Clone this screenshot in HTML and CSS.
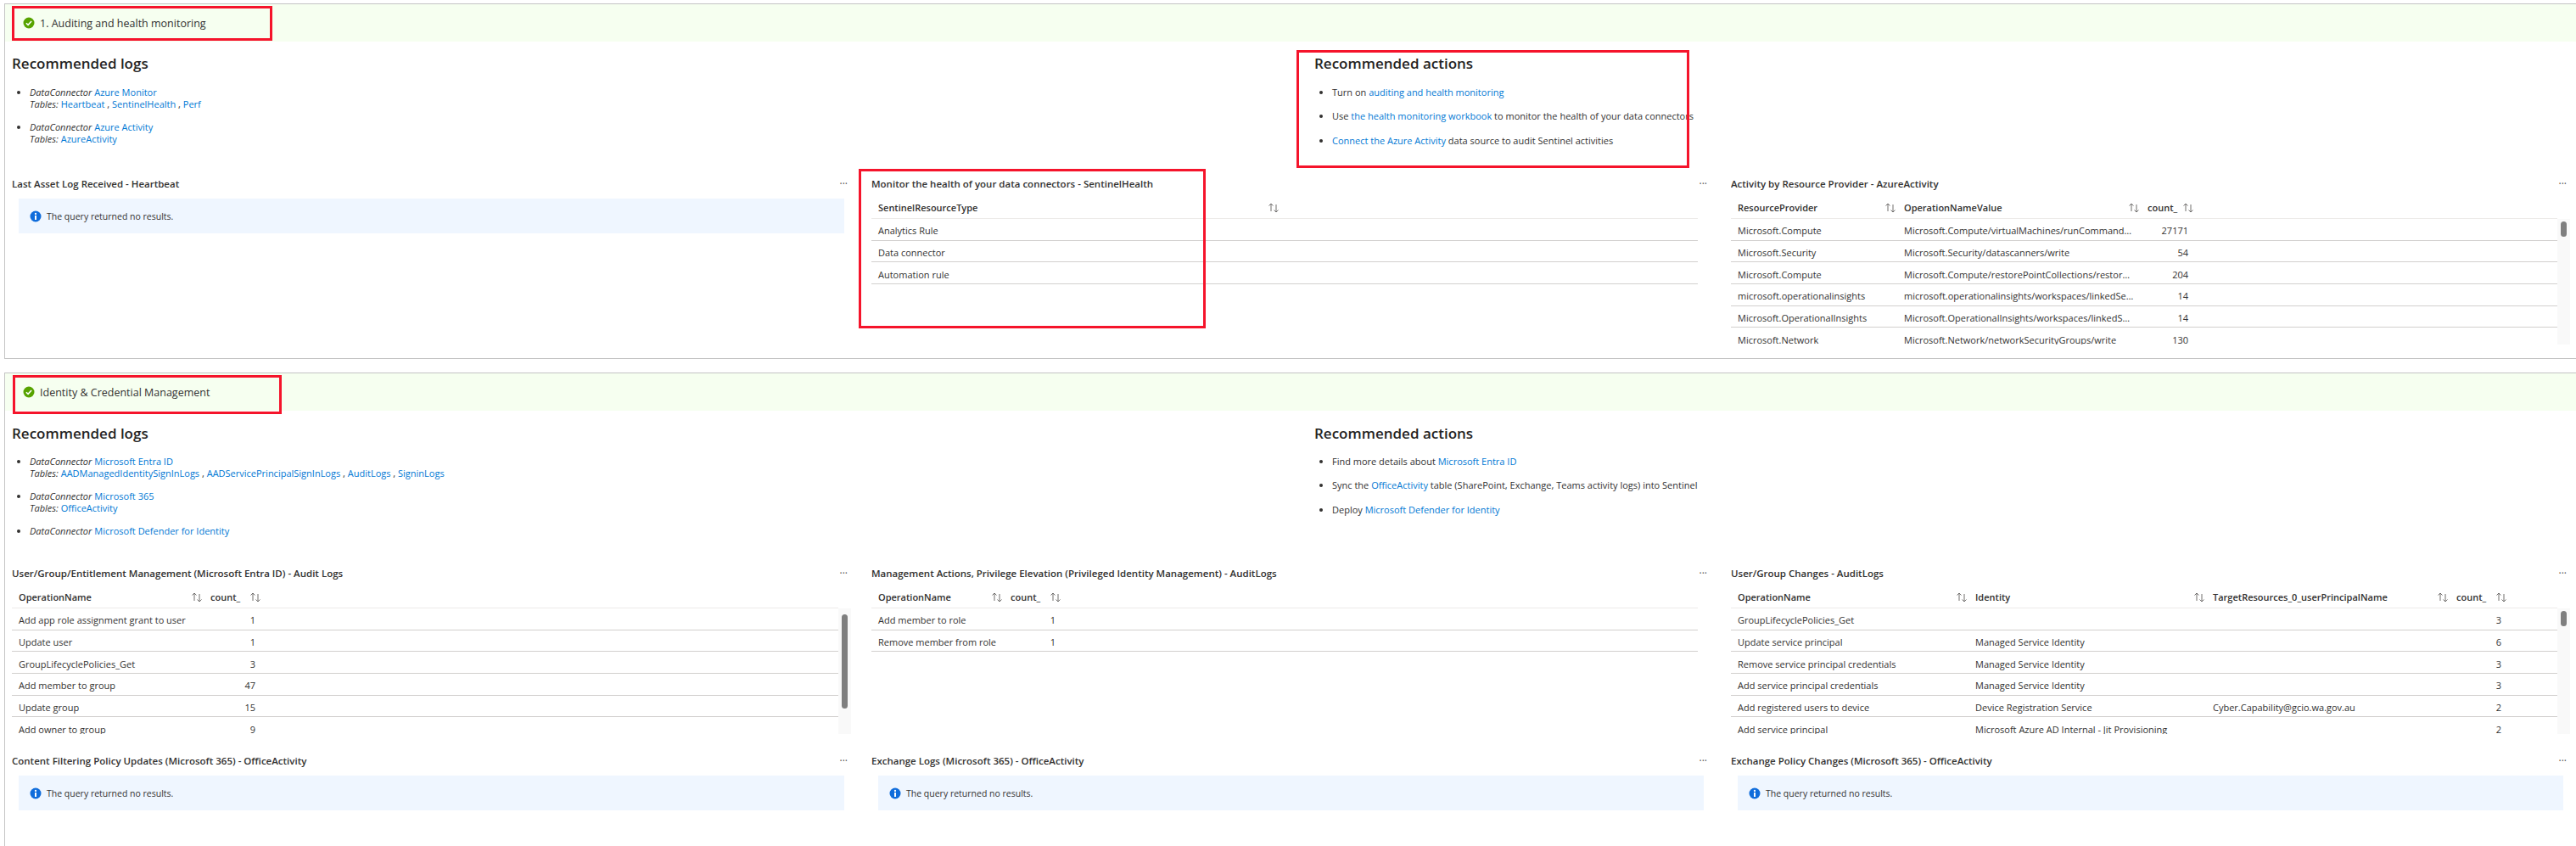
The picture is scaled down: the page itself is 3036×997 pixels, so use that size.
FILE: index.html
```html
<!DOCTYPE html>
<html lang="en">
<head>
<meta charset="utf-8">
<title>Workbook</title>
<link rel="stylesheet" href="styles.css">
</head>
<body>
<svg class="sprites" width="0" height="0" aria-hidden="true">
  <symbol id="check" viewBox="0 0 14 14"><circle cx="7" cy="7" r="6.5" fill="#57a300"/><path d="M3.9 7.2l2.2 2.2 4-4.4" fill="none" stroke="#fff" stroke-width="1.6"/></symbol>
  <symbol id="info" viewBox="0 0 14 14"><circle cx="7" cy="7" r="6.5" fill="#0f6cdb"/><rect x="6" y="6" width="2" height="5" fill="#fff"/><circle cx="7" cy="4" r="1.15" fill="#fff"/></symbol>
  <symbol id="sort" viewBox="0 0 14 14"><path d="M4 11V2M1.5 4.5L4 2l2.5 2.5M10 3v9M7.5 9.5L10 12l2.5-2.5" fill="none" stroke="#605e5c" stroke-width="0.9"/></symbol>
</svg>

<section class="group first">
  <header class="banner"><svg class="ico"><use href="#check"/></svg><span>1. Auditing and health monitoring</span></header>
  <div class="recs">
    <div class="rec">
      <h2>Recommended logs</h2>
      <ul class="logs">
        <li><em>DataConnector</em> <a>Azure Monitor</a><br><em>Tables:</em> <a>Heartbeat</a> , <a>SentinelHealth</a> , <a>Perf</a></li>
        <li><em>DataConnector</em> <a>Azure Activity</a><br><em>Tables:</em> <a>AzureActivity</a></li>
      </ul>
    </div>
    <div class="rec actions">
      <h2>Recommended actions</h2>
      <ul class="acts">
        <li>Turn on <a>auditing and health monitoring</a></li>
        <li>Use <a>the health monitoring workbook</a> to monitor the health of your data connectors</li>
        <li><a>Connect the Azure Activity</a> data source to audit Sentinel activities</li>
      </ul>
    </div>
  </div>
  <div class="panels">
    <article class="panel">
      <div class="ptitle"><h3>Last Asset Log Received - Heartbeat</h3><span class="more">···</span></div>
      <div class="notice"><svg class="ico"><use href="#info"/></svg><span>The query returned no results.</span></div>
    </article>
    <article class="panel">
      <div class="ptitle"><h3>Monitor the health of your data connectors - SentinelHealth</h3><span class="more">···</span></div>
      <div class="grid t-sentinel">
        <div class="row head"><div class="c">SentinelResourceType<svg class="sort"><use href="#sort"/></svg></div></div>
        <div class="body">
          <div class="row"><div class="c">Analytics Rule</div></div>
          <div class="row"><div class="c">Data connector</div></div>
          <div class="row"><div class="c">Automation rule</div></div>
        </div>
      </div>
    </article>
    <article class="panel">
      <div class="ptitle"><h3>Activity by Resource Provider - AzureActivity</h3><span class="more">···</span></div>
      <div class="grid t-activity scrolls thumb-short">
        <div class="row head"><div class="c">ResourceProvider<svg class="sort"><use href="#sort"/></svg></div><div class="c">OperationNameValue<svg class="sort"><use href="#sort"/></svg></div><div class="c">count_<svg class="sort"><use href="#sort"/></svg></div></div>
        <div class="body">
          <div class="row"><div class="c">Microsoft.Compute</div><div class="c">Microsoft.Compute/virtualMachines/runCommand/action</div><div class="c n">27171</div></div>
          <div class="row"><div class="c">Microsoft.Security</div><div class="c">Microsoft.Security/datascanners/write</div><div class="c n">54</div></div>
          <div class="row"><div class="c">Microsoft.Compute</div><div class="c">Microsoft.Compute/restorePointCollections/restorePoints/write</div><div class="c n">204</div></div>
          <div class="row"><div class="c">microsoft.operationalinsights</div><div class="c">microsoft.operationalinsights/workspaces/linkedServices/write</div><div class="c n">14</div></div>
          <div class="row"><div class="c">Microsoft.OperationalInsights</div><div class="c">Microsoft.OperationalInsights/workspaces/linkedServices/write</div><div class="c n">14</div></div>
          <div class="row"><div class="c">Microsoft.Network</div><div class="c">Microsoft.Network/networkSecurityGroups/write</div><div class="c n">130</div></div>
        </div>
      </div>
    </article>
  </div>
  <div class="mark m1"></div>
  <div class="mark m2"></div>
  <div class="mark m3"></div>
</section>

<section class="group second">
  <header class="banner"><svg class="ico"><use href="#check"/></svg><span>Identity &amp; Credential Management</span></header>
  <div class="recs">
    <div class="rec">
      <h2>Recommended logs</h2>
      <ul class="logs">
        <li><em>DataConnector</em> <a>Microsoft Entra ID</a><br><em>Tables:</em> <a>AADManagedIdentitySignInLogs</a> , <a>AADServicePrincipalSignInLogs</a> , <a>AuditLogs</a> , <a>SigninLogs</a></li>
        <li><em>DataConnector</em> <a>Microsoft 365</a><br><em>Tables:</em> <a>OfficeActivity</a></li>
        <li><em>DataConnector</em> <a>Microsoft Defender for Identity</a></li>
      </ul>
    </div>
    <div class="rec actions">
      <h2>Recommended actions</h2>
      <ul class="acts">
        <li>Find more details about <a>Microsoft Entra ID</a></li>
        <li>Sync the <a>OfficeActivity</a> table (SharePoint, Exchange, Teams activity logs) into Sentinel</li>
        <li>Deploy <a>Microsoft Defender for Identity</a></li>
      </ul>
    </div>
  </div>
  <div class="panels">
    <article class="panel">
      <div class="ptitle"><h3>User/Group/Entitlement Management (Microsoft Entra ID) - Audit Logs</h3><span class="more">···</span></div>
      <div class="grid t-entitle scrolls thumb-long">
        <div class="row head"><div class="c">OperationName<svg class="sort"><use href="#sort"/></svg></div><div class="c">count_<svg class="sort"><use href="#sort"/></svg></div></div>
        <div class="body">
          <div class="row"><div class="c">Add app role assignment grant to user</div><div class="c n">1</div></div>
          <div class="row"><div class="c">Update user</div><div class="c n">1</div></div>
          <div class="row"><div class="c">GroupLifecyclePolicies_Get</div><div class="c n">3</div></div>
          <div class="row"><div class="c">Add member to group</div><div class="c n">47</div></div>
          <div class="row"><div class="c">Update group</div><div class="c n">15</div></div>
          <div class="row"><div class="c">Add owner to group</div><div class="c n">9</div></div>
        </div>
      </div>
    </article>
    <article class="panel">
      <div class="ptitle"><h3>Management Actions, Privilege Elevation (Privileged Identity Management) - AuditLogs</h3><span class="more">···</span></div>
      <div class="grid t-pim">
        <div class="row head"><div class="c">OperationName<svg class="sort"><use href="#sort"/></svg></div><div class="c">count_<svg class="sort"><use href="#sort"/></svg></div></div>
        <div class="body">
          <div class="row"><div class="c">Add member to role</div><div class="c n">1</div></div>
          <div class="row"><div class="c">Remove member from role</div><div class="c n">1</div></div>
        </div>
      </div>
    </article>
    <article class="panel">
      <div class="ptitle"><h3>User/Group Changes - AuditLogs</h3><span class="more">···</span></div>
      <div class="grid t-changes scrolls thumb-short">
        <div class="row head"><div class="c">OperationName<svg class="sort"><use href="#sort"/></svg></div><div class="c">Identity<svg class="sort"><use href="#sort"/></svg></div><div class="c">TargetResources_0_userPrincipalName<svg class="sort"><use href="#sort"/></svg></div><div class="c">count_<svg class="sort"><use href="#sort"/></svg></div></div>
        <div class="body">
          <div class="row"><div class="c">GroupLifecyclePolicies_Get</div><div class="c"></div><div class="c"></div><div class="c n">3</div></div>
          <div class="row"><div class="c">Update service principal</div><div class="c">Managed Service Identity</div><div class="c"></div><div class="c n">6</div></div>
          <div class="row"><div class="c">Remove service principal credentials</div><div class="c">Managed Service Identity</div><div class="c"></div><div class="c n">3</div></div>
          <div class="row"><div class="c">Add service principal credentials</div><div class="c">Managed Service Identity</div><div class="c"></div><div class="c n">3</div></div>
          <div class="row"><div class="c">Add registered users to device</div><div class="c">Device Registration Service</div><div class="c">Cyber.Capability@gcio.wa.gov.au</div><div class="c n">2</div></div>
          <div class="row"><div class="c">Add service principal</div><div class="c">Microsoft Azure AD Internal - Jit Provisioning</div><div class="c"></div><div class="c n">2</div></div>
        </div>
      </div>
    </article>
    <article class="panel short">
      <div class="ptitle"><h3>Content Filtering Policy Updates (Microsoft 365) - OfficeActivity</h3><span class="more">···</span></div>
      <div class="notice"><svg class="ico"><use href="#info"/></svg><span>The query returned no results.</span></div>
    </article>
    <article class="panel short">
      <div class="ptitle"><h3>Exchange Logs (Microsoft 365) - OfficeActivity</h3><span class="more">···</span></div>
      <div class="notice"><svg class="ico"><use href="#info"/></svg><span>The query returned no results.</span></div>
    </article>
    <article class="panel short">
      <div class="ptitle"><h3>Exchange Policy Changes (Microsoft 365) - OfficeActivity</h3><span class="more">···</span></div>
      <div class="notice"><svg class="ico"><use href="#info"/></svg><span>The query returned no results.</span></div>
    </article>
  </div>
  <div class="mark m4"></div>
</section>
</body>
</html>
```

FILE: styles.css
```css
html, body { margin: 0; padding: 0; height: 997px; overflow: hidden; background: #fff; }
body { font-family: "Open Sans", "Noto Sans", "Liberation Sans", sans-serif; font-size: 11px; color: #323130; }
.sprites { position: absolute; }

.group { position: relative; margin-left: 5px; border: solid #c4c4c4; border-width: 1px 0 1px 1px; box-sizing: border-box; }
.first { margin-top: 4px; height: 419px; }
.second { margin-top: 16px; height: 560px; border-bottom: 0; }

.banner { height: 44px; background: #f6fff0; display: flex; align-items: center; padding-left: 21px; gap: 6px; font-size: 12.5px; font-weight: 400; }
.banner .ico { width: 14px; height: 14px; }

.recs { display: flex; padding-left: 8px; }
.rec { width: 1535px; flex: none; height: 155px; }
.second .rec { height: 179px; }
h2 { margin: 0; font-size: 17px; font-weight: 600; line-height: 24px; padding-top: 14px; color: #252423; }
.second h2 { padding-top: 15px; }

ul { list-style: disc; margin: 0; padding: 0 0 0 21px; }
.logs { margin-top: 15px; }
.logs li { line-height: 14px; margin-bottom: 13px; }
.acts { margin-top: 15px; }
.acts li { line-height: 14px; margin-bottom: 14.3px; }
.second .logs, .second .acts { margin-top: 14px; }
em { font-style: italic; }
a { color: #0078d4; }

.panels { display: grid; grid-template-columns: repeat(3, 989px); column-gap: 24px; row-gap: 19px; padding-left: 8px; }
.panel { height: 202px; overflow: hidden; min-width: 0; }
.second .panel.short { height: 100px; }
.ptitle { height: 25px; display: flex; align-items: center; justify-content: space-between; padding-right: 4px; }
h3 { margin: 0; font-size: 11.5px; font-weight: 600; color: #323130; }
.more { font-size: 12px; letter-spacing: 0; color: #555; }

.notice { margin: 5px 8px 0; height: 41px; background: #eff6ff; display: flex; align-items: center; gap: 6px; padding-left: 13px; font-size: 10.5px; width: 960px; }
.notice .ico { width: 14px; height: 14px; }

.grid { width: 974px; position: relative; margin-top: 3px; }
.row { display: grid; height: 25.7px; box-sizing: border-box; border-bottom: 1px solid #d2d0ce; align-items: center; }
.row.head { height: 26px; border-bottom-color: #edebe9; font-weight: 600; }
.c { padding: 0 8px; min-width: 0; white-space: nowrap; overflow: hidden; text-overflow: ellipsis; display: flex; align-items: center; justify-content: space-between; }
.body .c { display: block; padding-top: 3px; }
.c.n { text-align: right; }
.sort { width: 14px; height: 14px; flex: none; margin-right: -7px; }

.t-sentinel .row { grid-template-columns: 482px; }
.t-activity .row { grid-template-columns: 196px 287px 64px; }
.t-entitle .row { grid-template-columns: 226px 69px; }
.t-pim .row { grid-template-columns: 156px 69px; }
.t-changes .row { grid-template-columns: 280px 280px 287px 69px; }

.scrolls::before { content: ""; position: absolute; right: -15px; top: 26px; bottom: 0; width: 15px; background: #f9f9f9; }
.scrolls::after { content: ""; position: absolute; right: -11px; width: 7px; border-radius: 4px; background: #7f7f7f; }
.thumb-short::after { top: 29px; height: 18px; }
.thumb-long::after { top: 33px; height: 111px; }

.mark { position: absolute; border: 3px solid #f5142b; box-sizing: border-box; }
.m1 { left: 8px; top: 2px; width: 307px; height: 41px; }
.m2 { left: 1006px; top: 194px; width: 409px; height: 188px; }
.m3 { left: 1522px; top: 54px; width: 463px; height: 139px; }
.m4 { left: 9px; top: 2px; width: 317px; height: 46px; }
```
